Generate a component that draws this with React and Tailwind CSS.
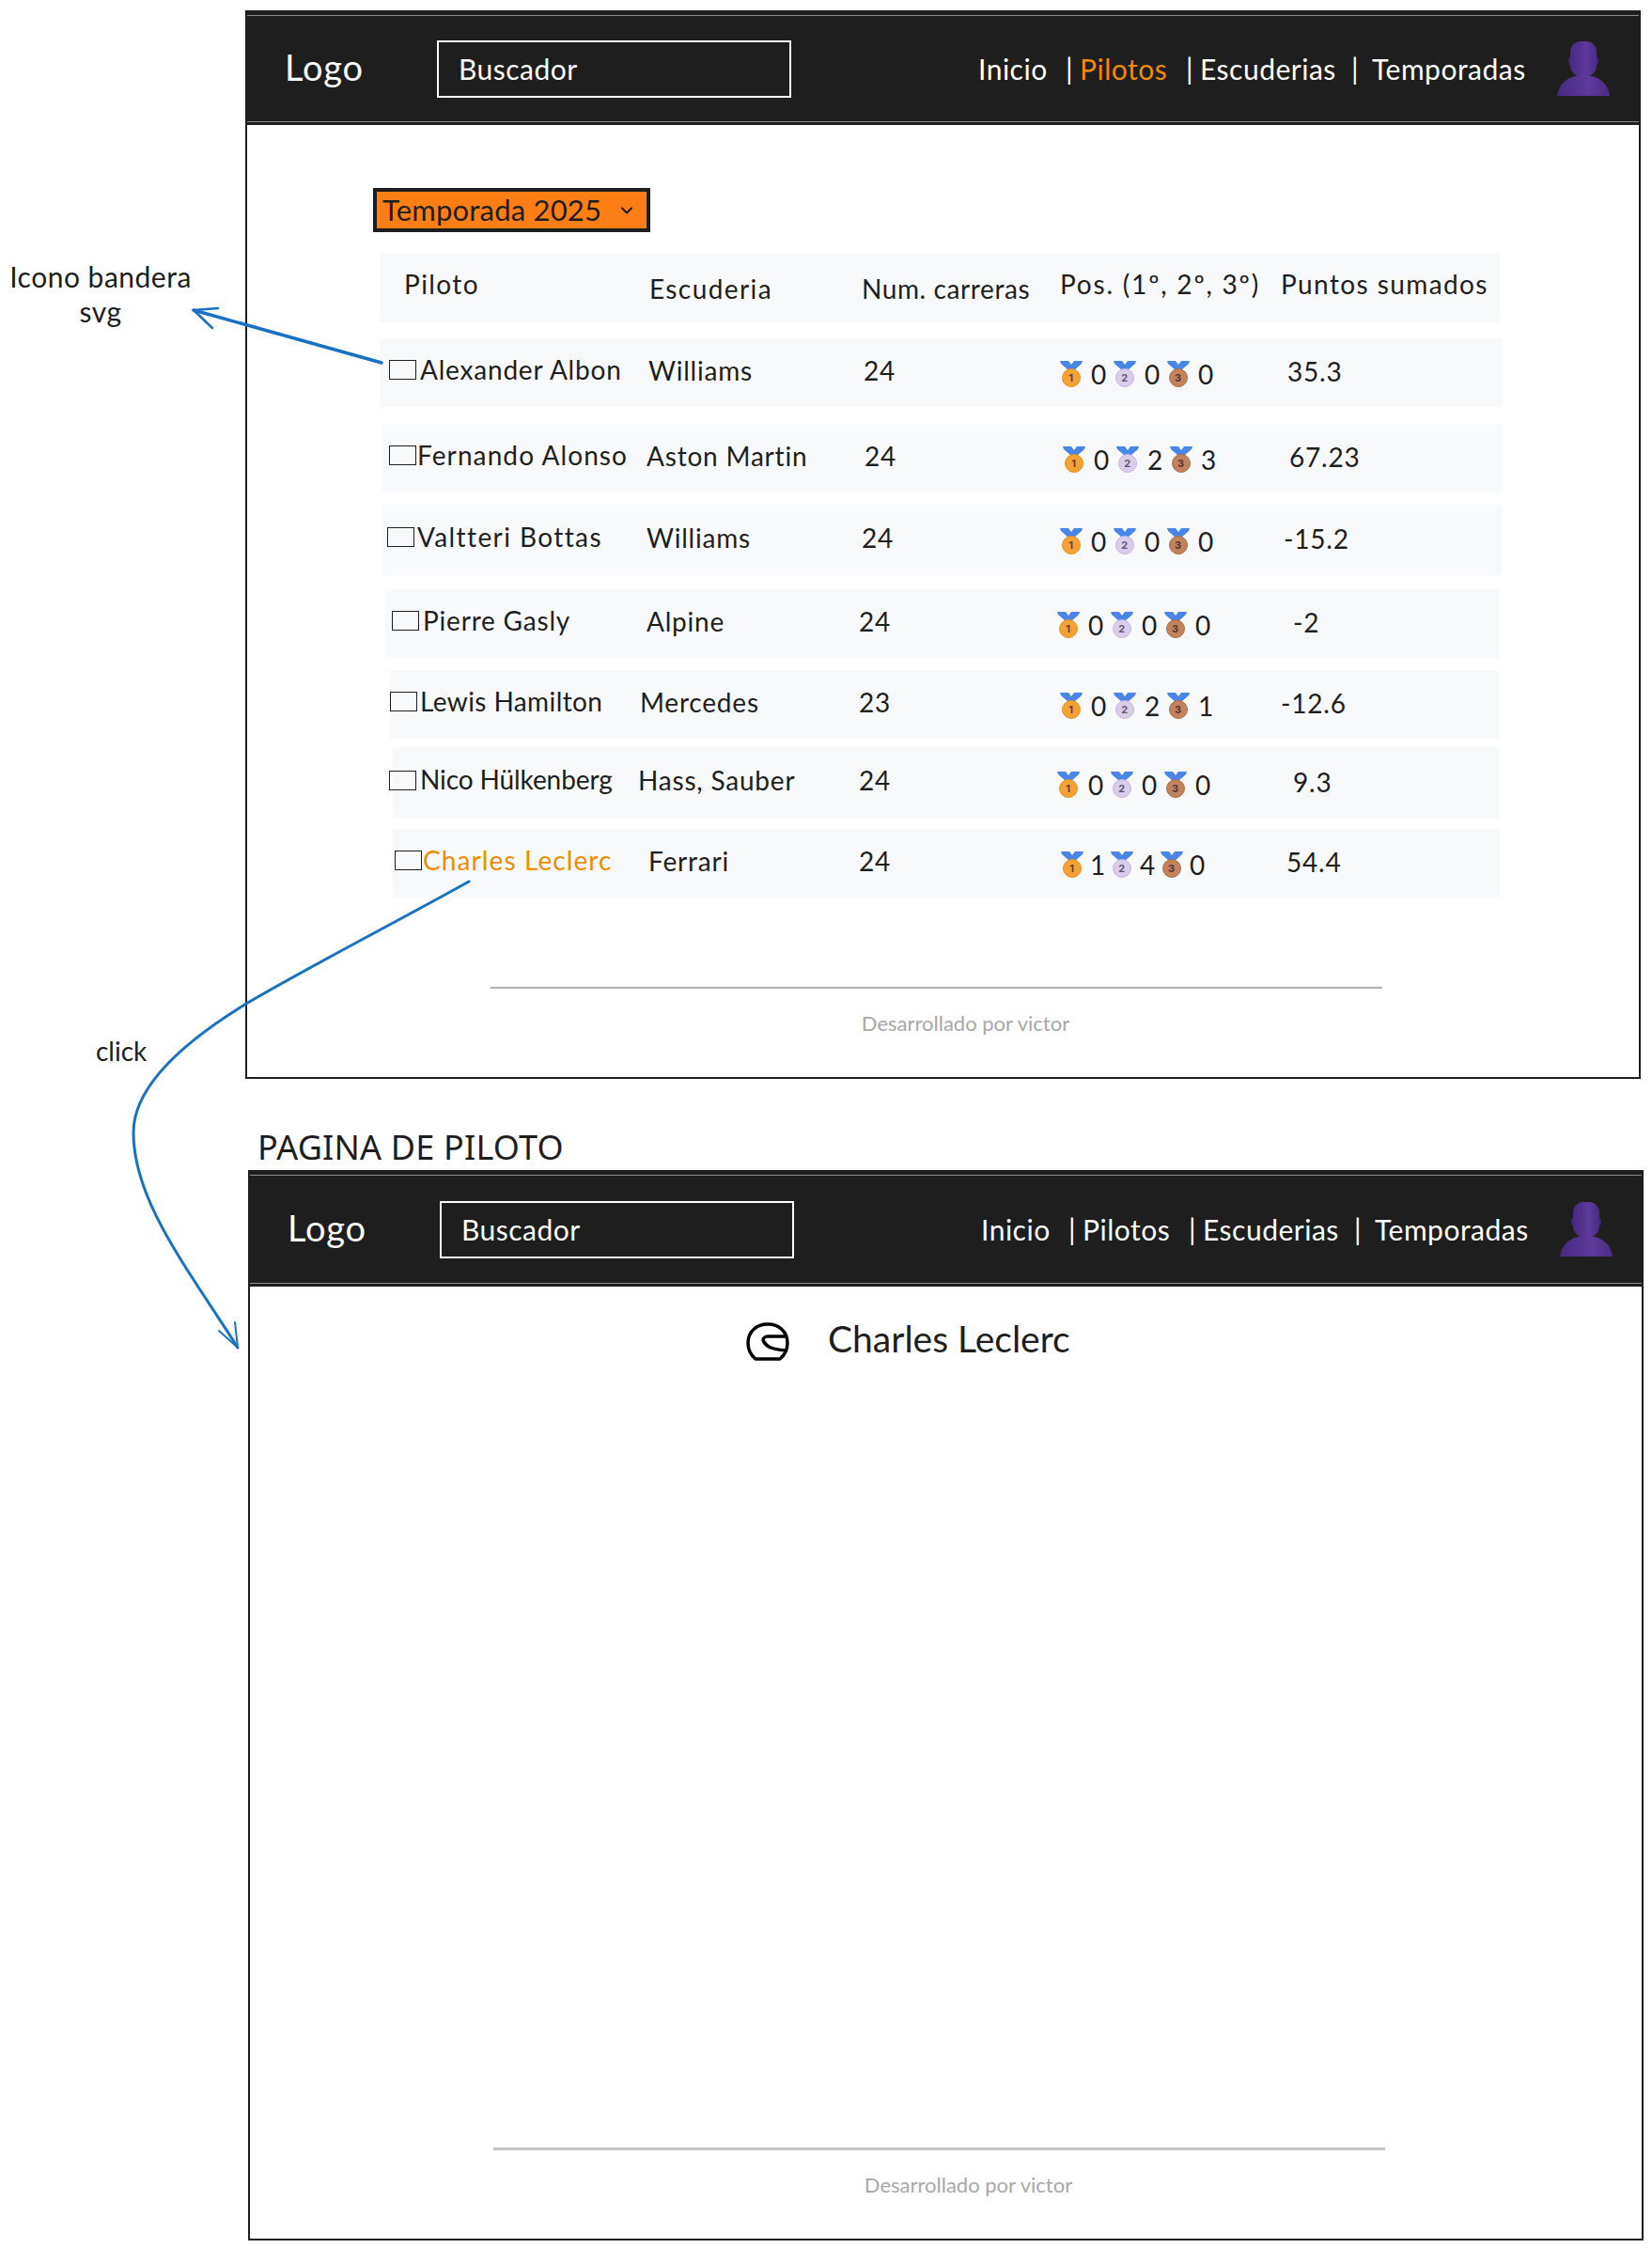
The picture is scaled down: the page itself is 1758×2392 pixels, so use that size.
import React from 'react';
import { ChevronDown } from 'lucide-react';

const rows = [
  { name: 'Alexander Albon', team: 'Williams', races: 24, p: [0, 0, 0], pts: '35.3', cls: 'mt-[17px] ml-[141px] w-[1195px] h-[73px] pl-[10px] grid-cols-[33px_243px_229px_209px_242px_1fr]' },
  { name: 'Fernando Alonso', team: 'Aston Martin', races: 24, p: [0, 2, 3], pts: '67.23', nameCls: 'tracking-[1.1px]', cls: 'mt-[19px] ml-[144px] w-[1192px] h-[71px] pl-[7px] grid-cols-[30px_244px_232px_211px_241px_1fr]' },
  { name: 'Valtteri Bottas', team: 'Williams', races: 24, p: [0, 0, 0], pts: '-15.2', nameCls: 'tracking-[1.4px]', cls: 'mt-[14px] ml-[144px] w-[1191px] h-[75px] pl-[5px] grid-cols-[32px_244px_229px_211px_238px_1fr]' },
  { name: 'Pierre Gasly', team: 'Alpine', races: 24, p: [0, 0, 0], pts: '-2', cls: 'mt-[15px] ml-[147px] w-[1185px] h-[73px] pl-[7px] grid-cols-[33px_238px_226px_211px_251px_1fr]' },
  { name: 'Lewis Hamilton', team: 'Mercedes', races: 23, p: [0, 2, 1], pts: '-12.6', nameCls: 'tracking-[0.4px]', cls: 'mt-[13px] ml-[152px] w-[1180px] h-[73px] grid-cols-[32px_234px_233px_214px_235px_1fr]' },
  { name: 'Nico Hülkenberg', team: 'Hass, Sauber', races: 24, p: [0, 0, 0], pts: '9.3', flag: '-ml-[4px]', nameCls: 'tracking-[-0.1px]', cls: 'mt-[9px] ml-[155px] w-[1177px] h-[76px] grid-cols-[29px_232px_235px_211px_251px_1fr]' },
  { name: 'Charles Leclerc', team: 'Ferrari', races: 24, p: [1, 4, 0], pts: '54.4', active: true, nameCls: 'tracking-[1.1px] text-[#f08c00]', digit: 'w-[29px] pl-[7px]', cls: 'mt-[11px] ml-[155px] w-[1178px] h-[73px] pl-[2px] grid-cols-[30px_240px_224px_215px_240px_1fr]' },
];

const medalColors = [
  { fill: '#f5a234', rim: '#e98f25', text: '#6b3a4a', n: 1 },
  { fill: '#d9cdea', rim: '#c6b5e0', text: '#5f5470', n: 2 },
  { fill: '#c2835c', rim: '#ad6d48', text: '#5a2f3a', n: 3 },
];

const Medal = ({ kind }) => {
  const m = medalColors[kind];
  return (
    <svg width="24" height="28" viewBox="0 0 24 28" className="shrink-0">
      <path d="M0 0h9l3 4 3-4h9l-1 3-8 7h-6L1 3z" fill="#4a86e8" />
      <circle cx="12" cy="18" r="9.5" fill={m.fill} stroke={m.rim} strokeWidth="1" />
      <text x="12" y="22" textAnchor="middle" fontSize="11" fontWeight="700" fontFamily="Inter, sans-serif" fill={m.text}>{m.n}</text>
    </svg>
  );
};

const Avatar = () => (
  <svg width="56" height="58" viewBox="0 0 56 58" className="shrink-0">
    <defs>
      <linearGradient id="av" x1="0" y1="0" x2="1" y2="0">
        <stop offset="0" stopColor="#472a80" />
        <stop offset="0.6" stopColor="#5e3a9c" />
        <stop offset="1" stopColor="#4b2c86" />
      </linearGradient>
    </defs>
    <ellipse cx="15" cy="21" rx="3" ry="5" fill="#40266f" />
    <ellipse cx="41" cy="21" rx="3" ry="5" fill="#40266f" />
    <rect x="14" y="0" width="28" height="37" rx="11" fill="url(#av)" />
    <path d="M0 58C2 43 14 36 28 36s26 7 28 22z" fill="url(#av)" />
  </svg>
);

const Helmet = () => (
  <svg width="46" height="41" viewBox="0 0 46 41" fill="none" stroke="#000" strokeWidth="3.5" strokeLinejoin="round">
    <path d="M10 39C4 34 2 28 2 22 2 10 11 2 23 2s21 8 21 20c0 6-2 12-8 17z" />
    <path d="M44 15H23c-4 0-6 3-4 6 3 5 8 8 25 9" />
  </svg>
);

const Nav = ({ active }) => (
  <div className="bg-[#1e1e1e] pt-[3px] pb-[3px] shrink-0">
    <div className="h-full border-y border-[#8a8a8a] flex items-center text-white">
      <span className="ml-[40px] w-[162px] -mt-[4px] text-[38px] leading-none tracking-[0.8px]">Logo</span>
      <div className="w-[377px] h-[61px] border-2 border-white flex items-center pl-[21px] text-[30px] tracking-[0.5px]">Buscador</div>
      <nav className="ml-[199px] flex items-center text-[30px] leading-none tracking-[0.5px]">
        <span className="w-[93px]">Inicio</span>
        <span className="w-[15px]">|</span>
        <span className={active ? 'w-[113px] text-[#f08c00]' : 'w-[113px]'}>Pilotos</span>
        <span className="w-[15px]">|</span>
        <span className="w-[161px]">Escuderias</span>
        <span className="w-[22px]">|</span>
        <span className="w-[197px]">Temporadas</span>
      </nav>
      <Avatar />
    </div>
  </div>
);

const Footer = ({ line }) => (
  <div className="mt-auto pb-[43px]">
    <div className={`ml-[259px] w-[949px] ${line}`} />
    <p className="mt-[23px] ml-[290px] w-[949px] text-center text-[22px] leading-[28px] text-[#a8a8a8]">Desarrollado por victor</p>
  </div>
);

const Row = ({ r }) => (
  <div className={`grid items-center bg-[#f8f9fa] text-[28px] tracking-[0.8px] ${r.cls}`}>
    <span className={`w-[29px] h-[21px] -mt-[6px] border-[1.5px] border-[#1e1e1e] ${r.flag || ''}`} />
    <span className={`-mt-[8px] ${r.nameCls || ''}`}>{r.name}</span>
    <span className="-mt-[6px]">{r.team}</span>
    <span className="-mt-[6px]">{r.races}</span>
    <span className="flex items-center mt-[3px]">
      {r.p.map((v, i) => (
        <React.Fragment key={i}>
          <Medal kind={i} />
          <span className={r.digit || 'w-[33px] pl-[9px]'}>{v}</span>
        </React.Fragment>
      ))}
    </span>
    <span className="-mt-[3px]">{r.pts}</span>
  </div>
);

export default function App() {
  return (
    <div className="relative w-[1758px] h-[2392px] bg-white text-[#1e1e1e] font-['Lato',sans-serif] overflow-hidden">
      {/* notas del boceto */}
      <p className="absolute left-[6px] top-[276px] w-[202px] text-center text-[30px] leading-[37px] tracking-[0.5px]">Icono bandera<br />svg</p>
      <p className="absolute left-[102px] top-[1100px] text-[28px] leading-[36px]">click</p>
      <p className="absolute left-[274px] top-[1197px] text-[36px] leading-[48px] font-['Noto_Sans',sans-serif] tracking-[0.2px]">PAGINA DE PILOTO</p>

      {/* listado de pilotos */}
      <div className="absolute left-[261px] top-[11px] w-[1485px] h-[1137px] border-2 border-[#1e1e1e] flex flex-col">
        <div className="h-[120px] flex flex-col [&>div]:h-full">
          <Nav active />
        </div>
        <div className="mt-[67px] ml-[134px] w-[295px] h-[47px] bg-[#fd7e14] border-[4px] border-[#1e1e1e] flex items-center justify-between pl-[6px] pr-[11px] text-[31px] leading-none tracking-[0.2px]">
          <span>Temporada 2025</span>
          <ChevronDown size={20} strokeWidth={2.5} />
        </div>
        <div className="mt-[23px] ml-[141px] w-[1192px] h-[73px] bg-[#f8f9fa] grid grid-cols-[261px_226px_211px_235px_1fr] items-center pl-[26px] text-[28px] tracking-[1.4px]">
          <span className="-mt-[10px]">Piloto</span>
          <span>Escuderia</span>
          <span className="tracking-[0.6px]">Num. carreras</span>
          <span className="-mt-[10px] tracking-[1.8px]">Pos. (1º, 2º, 3º)</span>
          <span className="-mt-[10px]">Puntos sumados</span>
        </div>
        {rows.map(r => <Row key={r.name} r={r} />)}
        <Footer line="h-[2px] bg-[#b0b0b0]" />
      </div>

      {/* pagina de piloto */}
      <div className="absolute left-[264px] top-[1245px] w-[1485px] h-[1139px] border-2 border-[#1e1e1e] flex flex-col">
        <div className="h-[122px] flex flex-col [&>div]:h-full">
          <Nav />
        </div>
        <div className="mt-[38px] ml-[528px] flex items-center gap-[41px] text-[39px] leading-none">
          <Helmet />
          <span className="-mt-[6px]">Charles Leclerc</span>
        </div>
        <Footer line="h-[3px] bg-[#c4c4c4]" />
      </div>

      {/* flechas */}
      <svg className="absolute left-0 top-0 pointer-events-none" width="1758" height="2392" fill="none" stroke="#1971c2" strokeLinecap="round" strokeLinejoin="round">
        <path d="M406 386L206 330" strokeWidth="3.5" />
        <path d="M232 328L206 330L226 349" strokeWidth="2.5" />
        <path d="M499 938C420 982 330 1028 262 1068C190 1112 142 1158 142 1205C142 1278 200 1350 253 1434" strokeWidth="3" />
        <path d="M233 1416L253 1434L250 1407" strokeWidth="2" />
      </svg>
    </div>
  );
}
